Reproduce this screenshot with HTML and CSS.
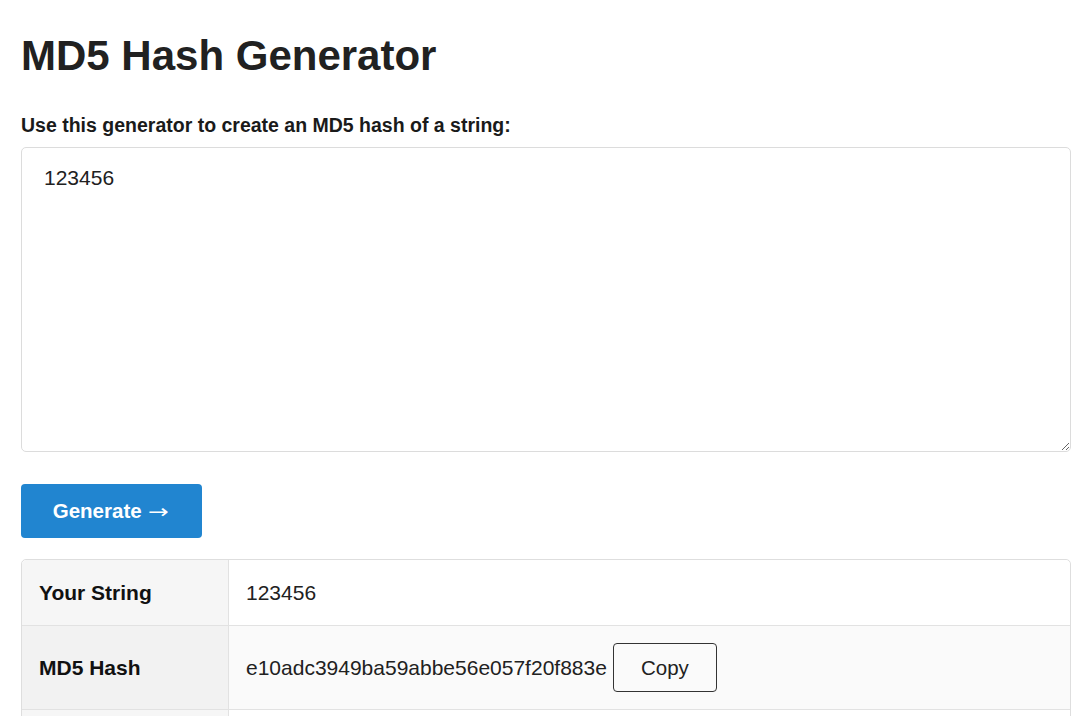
FILE: index.html
```html
<!DOCTYPE html>
<html lang="en">
<head>
<meta charset="utf-8">
<title>MD5 Hash Generator</title>
<link rel="stylesheet" href="styles.css">
</head>
<body>
<main class="page">
  <h1 class="title">MD5 Hash Generator</h1>
  <form class="gen-form">
    <label class="field-label" for="input">Use this generator to create an MD5 hash of a string:</label>
    <textarea id="input" class="input-area">123456</textarea>
    <button type="button" class="btn-generate">Generate <span class="arrow">→</span></button>
  </form>
  <table class="result">
    <tr>
      <th>Your String</th>
      <td class="plain">123456</td>
    </tr>
    <tr class="alt">
      <th>MD5 Hash</th>
      <td><span class="hash">e10adc3949ba59abbe56e057f20f883e</span><button type="button" class="btn-copy">Copy</button></td>
    </tr>
    <tr>
      <th>&nbsp;</th>
      <td class="plain">&nbsp;</td>
    </tr>
  </table>
</main>
</body>
</html>
```
FILE: styles.css
```css
* { box-sizing: border-box; }
html, body { margin: 0; padding: 0; background: #fff; }
body {
  font-family: "Liberation Sans", Arial, sans-serif;
  color: #212121;
}
.page {
  padding: 0 7px 0 21px;
}
.title {
  font-size: 42px;
  font-weight: bold;
  line-height: 48px;
  margin: 0;
  padding-top: 32px;
  color: #212121;
}
.gen-form {
  display: flex;
  flex-direction: column;
  align-items: flex-start;
}
.field-label {
  font-size: 19.5px;
  font-weight: bold;
  line-height: 24px;
  margin-top: 33px;
  margin-bottom: 10px;
  color: #1a1a1a;
}
.input-area {
  width: 100%;
  height: 305px;
  border: 1px solid #dcdcdc;
  border-radius: 5px;
  padding: 16px 22px;
  font-family: "Liberation Sans", Arial, sans-serif;
  font-size: 21px;
  line-height: 27px;
  color: #212121;
  resize: vertical;
  outline: none;
  display: block;
}
.btn-generate {
  margin-top: 32px;
  height: 54px;
  width: 181px;
  background: #2185d0;
  color: #fff;
  border: none;
  border-radius: 4px;
  font-family: "Liberation Sans", Arial, sans-serif;
  font-size: 20.5px;
  font-weight: bold;
  padding: 0 6px 0 0;
  cursor: pointer;
}
.arrow {
  font-family: "DejaVu Sans", sans-serif;
  font-weight: normal;
  font-size: 19px;
  display: inline-block;
  margin-left: 1px;
  transform: scaleX(1.3);
  transform-origin: left center;
}
.result {
  margin-top: 21px;
  width: 100%;
  border-collapse: separate;
  border-spacing: 0;
  border: 1px solid #dedede;
  border-radius: 5px;
  font-size: 21px;
}
.result th, .result td {
  padding: 17px 17px;
  text-align: left;
  vertical-align: middle;
  line-height: 31px;
  border-top: 1px solid #e2e2e2;
}
.result tr:first-child th, .result tr:first-child td { border-top: none; }
.result th {
  width: 207px;
  font-weight: bold;
  font-size: 21px;
  background: #f6f6f6;
  border-right: 1px solid #e2e2e2;
  color: #111;
}
.result td { background: #fff; color: #212121; }
.result tr.alt th { background: #f2f2f2; }
.result tr.alt td { background: #fafafa; }
.result tr:first-child th { border-top-left-radius: 5px; }
.result tr:first-child td { border-top-right-radius: 5px; }
.hash { vertical-align: middle; }
.btn-copy {
  vertical-align: middle;
  margin-left: 6px;
  width: 104px;
  height: 49px;
  background: transparent;
  border: 1px solid #333;
  border-radius: 4px;
  font-family: "Liberation Sans", Arial, sans-serif;
  font-size: 20.5px;
  color: #212121;
  cursor: pointer;
}
```
